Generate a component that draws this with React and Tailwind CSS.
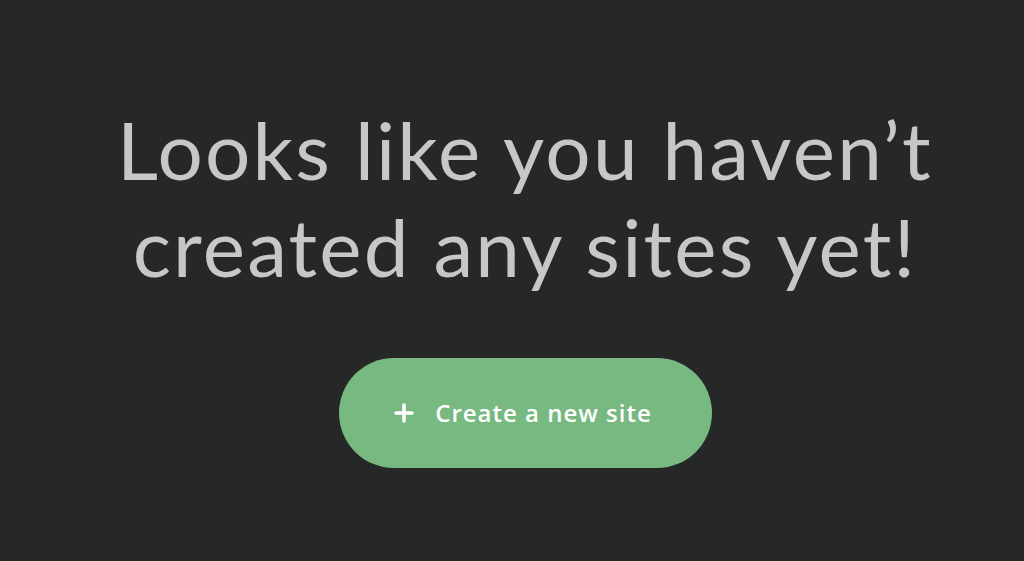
import React from 'react';

const PlusIcon = () => (
    <svg width="20" height="20" viewBox="0 0 20 20" className="shrink-0">
        <path d="M10 2v16M2 10h16" stroke="#ffffff" strokeWidth="3.6" strokeLinecap="round" />
    </svg>
);

export default function App() {
    return (
        <div
            className="w-full h-[561px] bg-[#262727] flex flex-col items-center pt-[101px] pl-[26px] overflow-hidden"
            style={{ fontFamily: "Lato, 'Open Sans', sans-serif" }}
        >
            {/* Empty state message */}
            <h1 className="text-[80px] leading-[97px] font-normal tracking-[2.2px] text-[#c8c6c6] text-center">
                Looks like you haven’t
                <br />
                created any sites yet!
            </h1>

            <button className="mt-[63px] w-[373px] h-[110px] rounded-full bg-[#77b981] flex items-center justify-center gap-[21px] text-white pr-[4px]">
                <PlusIcon />
                <span className="text-[24px] font-semibold tracking-[1px] font-['Open_Sans',sans-serif]">Create a new site</span>
            </button>
        </div>
    );
}
